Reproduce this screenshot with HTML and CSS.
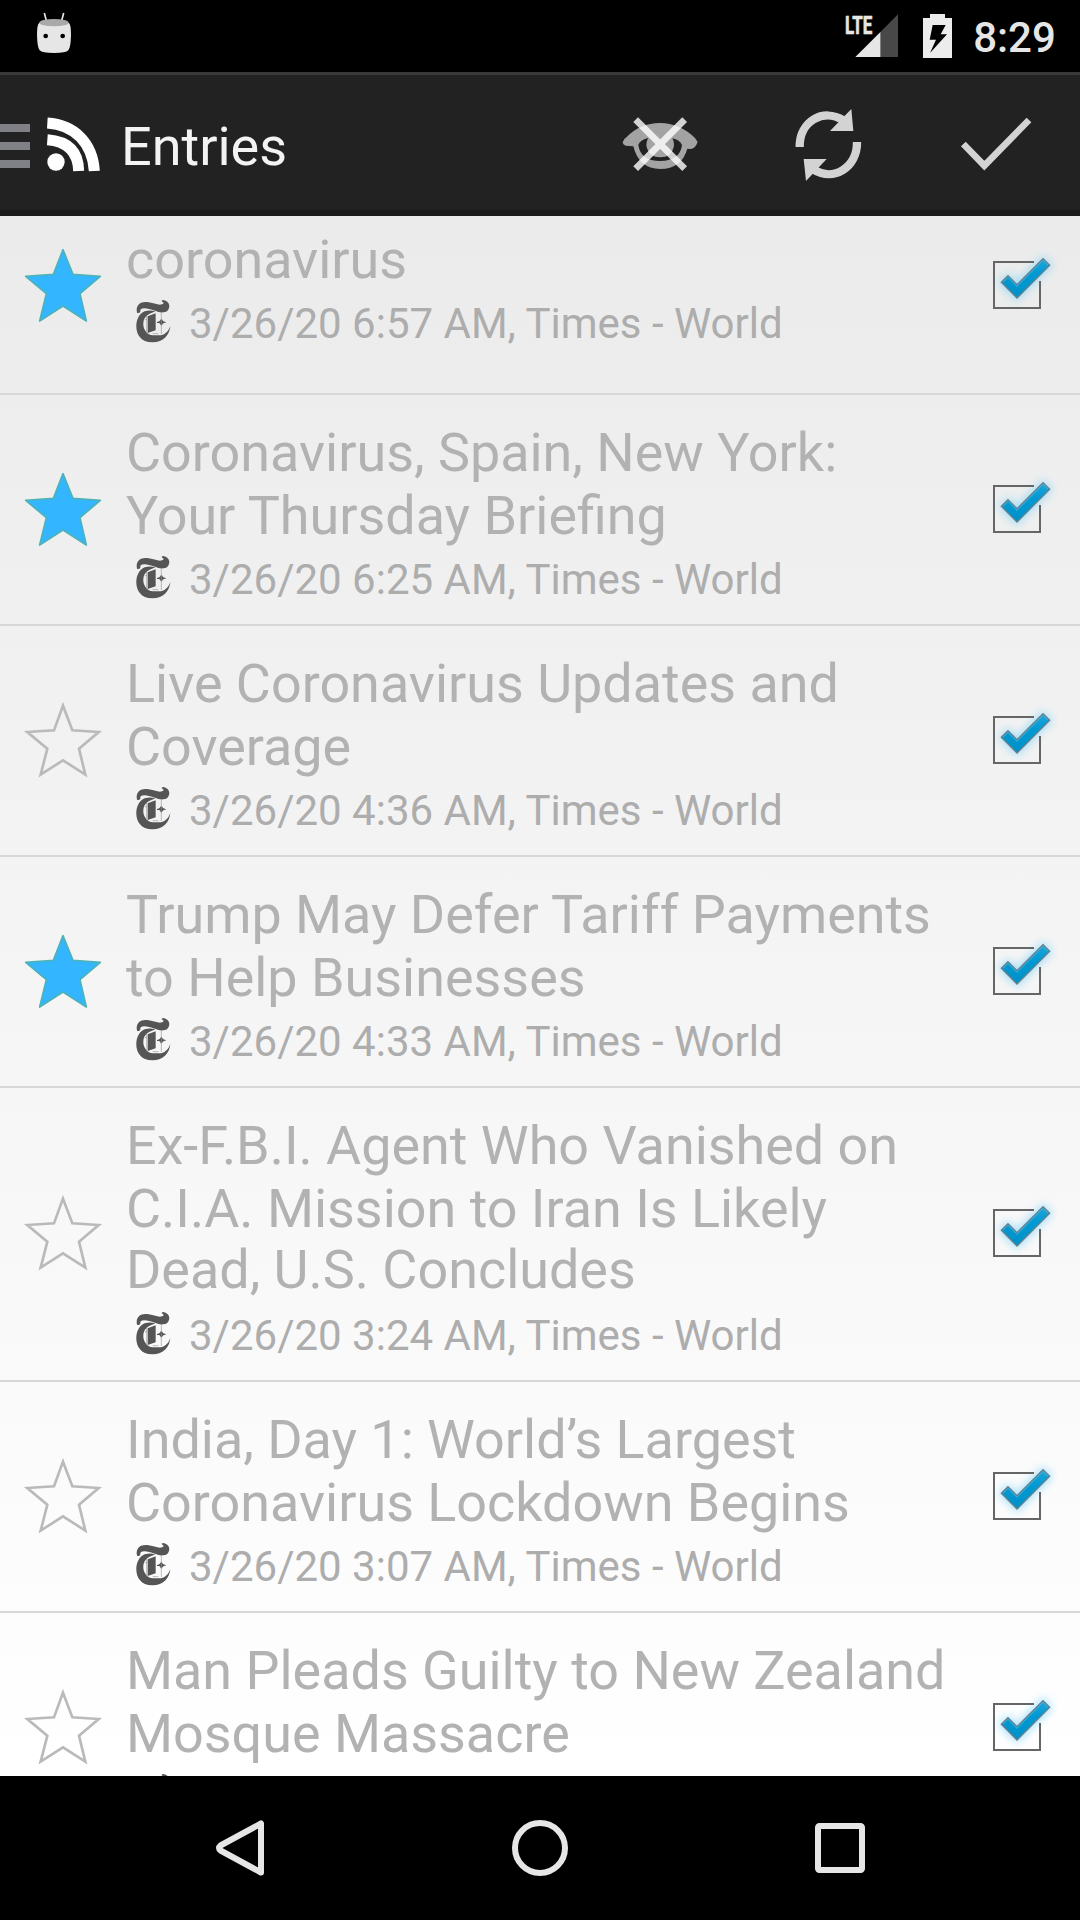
FILE: index.html
```html
<!DOCTYPE html>
<html lang="en">
<head>
<meta charset="utf-8">
<title>Entries</title>
<link rel="stylesheet" href="styles.css">
</head>
<body>
<svg class="defs" aria-hidden="true">
  <defs>
    <linearGradient id="tick-fill" x1="0" y1="0" x2="0" y2="1">
      <stop offset="0" stop-color="#1fa6dc"/>
      <stop offset="0.4" stop-color="#0099d3"/>
      <stop offset="1" stop-color="#0091c8"/>
    </linearGradient>
    <filter id="glow" x="-50%" y="-50%" width="200%" height="200%">
      <feGaussianBlur stdDeviation="12"/>
    </filter>
  </defs>
  <symbol id="star" viewBox="69 105 240 240">
    <path d="M189 119 L219 193 L301 199 L240 251 L259 333 L189 288 L119 333 L139 251 L77 199 L160 193 Z"/>
  </symbol>
  <symbol id="star-off" viewBox="69 105 240 240">
    <path d="M189 122 L217 196 L296 201 L237 251 L256 329 L189 286 L122 329 L142 251 L82 201 L162 196 Z"/>
  </symbol>
  <symbol id="paper" viewBox="75 27 108 132">
    <path d="M81 68 C76 42 94 34 112 36 C132 38 145 47 156 43 Q165 39 157 35 Q152 30 160 30 Q176 33 178 47 Q178 64 161 67 C143 70 124 55 103 55 Q88 56 91 66 Q86 71 81 68 Z"/>
    <path d="M104 64 C69 76 65 158 128 157 C160 157 179 134 181 107 C175 126 163 135 147 136 L129 136 C105 135 94 107 103 86 Q111 72 126 68 Q140 64 133 63 Q118 60 104 64 Z"/>
    <path d="M113 79 L137 70 V121 L113 129 Z M141 96 L148 94 L154 86 L160 94 L169 97 L160 100 L154 107 L148 99 L141 99 Z"/>
    <path class="hair" d="M110 78 V130 M154 66 V132 M104 89 H111 M128 131 H145"/>
  </symbol>
  <symbol id="check" viewBox="144 57 210 210">
    <path class="glow" d="M183 157 L204 137 L231 163 L309 85 L330 106 L231 205 Z"/>
    <path class="box" d="M282 96 H162 V234 H300 V153"/>
    <path class="tick" d="M184 157 L204 137 L231 164 L309 86 L329 106 L231 204 Z"/>
    <path class="shine" d="M189 157 L204 142 L231 169 L309 91 L323 105"/>
  </symbol>
</svg>

<div class="screen">
  <header class="status">
    <svg class="debug" viewBox="108 33 108 129">
      <path d="M133 39 L140 66 M191 39 L184 66" stroke="#e6e6e6" stroke-width="5"/>
      <path d="M118 68 Q162 88 206 68 Q213 72 213 105 Q212 144 205 151 Q198 159 162 159 Q126 159 119 151 Q112 144 111 105 Q111 72 118 68 Z" fill="#e6e6e6"/>
      <ellipse cx="162" cy="68" rx="44" ry="11" fill="#a9a9a9"/>
      <circle cx="137" cy="108" r="7"/><circle cx="188" cy="108" r="7"/>
    </svg>
    <svg class="signal" viewBox="72 36 165 141">
      <text class="lte" x="75" y="101" textLength="82" lengthAdjust="spacingAndGlyphs">LTE</text>
      <path d="M106 171 L182 95 V171 Z" fill="#e6e6e6"/>
      <path d="M182 95 L234 43 V171 H182 Z" fill="#484848"/>
    </svg>
    <svg class="battery" viewBox="306 36 93 141">
      <path d="M309 54 H330 V42 H375 V54 H396 V174 H309 Z" fill="#ececec"/>
      <path d="M338 75 H377 L362 103 H381 L330 159 L348 119 H329 Z" fill="#000"/>
    </svg>
    <span class="clock">8:29</span>
  </header>

  <nav class="bar">
    <span class="drawer"><i></i><i></i><i></i></span>
    <svg class="rss" viewBox="138 348 165 168">
      <circle cx="168" cy="486" r="26" fill="#fff"/>
      <path d="M142 419 Q234 426 236 513 M142 369 C224 374 278 430 283 513" fill="none" stroke="#fff" stroke-width="33"/>
    </svg>
    <h1>Entries</h1>
    <div class="actions">
      <svg viewBox="36 78 288 288">
        <path fill="#a3a3a3" fill-rule="evenodd" d="M68 217 Q70 207 80 201 Q120 160 180 159 Q240 160 285 204 L293 216 Q285 238 270 237 L262 236 Q245 296 181 297 Q116 296 100 229 L77 227 Q68 224 68 217 Z M115 224 Q121 272 181 273 Q240 272 246 225 Q240 210 217 205 Q224 216 221 232 Q214 262 181 262 Q148 262 140 232 Q137 216 145 204 Q122 209 115 224 Z"/>
        <path d="M107 149 L254 296 M254 149 L107 296" stroke="#fff" stroke-opacity=".8" stroke-width="20"/>
      </svg>
      <svg viewBox="540 78 288 288">
        <path d="M599 231 C598 154 670 113 730 151 M771 216 C772 292 701 336 641 299" fill="none" stroke="#d3d3d3" stroke-width="25"/>
        <path d="M754 117 L760 183 H690 Z M618 333 L611 267 H680 Z" fill="#d3d3d3"/>
      </svg>
      <svg viewBox="1044 78 288 288">
        <path d="M1090 222 L1153 287 L1287 150" fill="none" stroke="#d3d3d3" stroke-width="20"/>
      </svg>
    </div>
  </nav>

  <main class="list">
    <article class="entry cut">
      <svg class="star on"><use href="#star"/></svg>
      <div class="body"><h2>coronavirus</h2>
        <p><svg class="paper"><use href="#paper"/></svg>3/26/20 6:57 AM, Times - World</p></div>
      <svg class="check"><use href="#check"/></svg>
    </article>
    <article class="entry">
      <svg class="star on"><use href="#star"/></svg>
      <div class="body"><h2>Coronavirus, Spain, New York:<br>Your Thursday Briefing</h2>
        <p><svg class="paper"><use href="#paper"/></svg>3/26/20 6:25 AM, Times - World</p></div>
      <svg class="check"><use href="#check"/></svg>
    </article>
    <article class="entry">
      <svg class="star"><use href="#star-off"/></svg>
      <div class="body"><h2>Live Coronavirus Updates and<br>Coverage</h2>
        <p><svg class="paper"><use href="#paper"/></svg>3/26/20 4:36 AM, Times - World</p></div>
      <svg class="check"><use href="#check"/></svg>
    </article>
    <article class="entry">
      <svg class="star on"><use href="#star"/></svg>
      <div class="body"><h2>Trump May Defer Tariff Payments<br>to Help Businesses</h2>
        <p><svg class="paper"><use href="#paper"/></svg>3/26/20 4:33 AM, Times - World</p></div>
      <svg class="check"><use href="#check"/></svg>
    </article>
    <article class="entry">
      <svg class="star"><use href="#star-off"/></svg>
      <div class="body"><h2>Ex-F.B.I. Agent Who Vanished on<br>C.I.A. Mission to Iran Is Likely<span class="third">Dead, U.S. Concludes</span></h2>
        <p><svg class="paper"><use href="#paper"/></svg>3/26/20 3:24 AM, Times - World</p></div>
      <svg class="check"><use href="#check"/></svg>
    </article>
    <article class="entry">
      <svg class="star"><use href="#star-off"/></svg>
      <div class="body"><h2>India, Day 1: World’s Largest<br>Coronavirus Lockdown Begins</h2>
        <p><svg class="paper"><use href="#paper"/></svg>3/26/20 3:07 AM, Times - World</p></div>
      <svg class="check"><use href="#check"/></svg>
    </article>
    <article class="entry">
      <svg class="star"><use href="#star-off"/></svg>
      <div class="body"><h2>Man Pleads Guilty to New Zealand<br>Mosque Massacre</h2>
        <p><svg class="paper"><use href="#paper"/></svg></p></div>
      <svg class="check"><use href="#check"/></svg>
    </article>
  </main>

  <footer class="keys">
    <svg viewBox="0 0 72 72"><path d="M57 11.5 V60.5 L16.500 38.500 Q13.500 36 16.500 33.500 Z"/></svg>
    <svg viewBox="0 0 72 72"><circle cx="36" cy="36" r="25"/></svg>
    <svg viewBox="0 0 72 72"><rect x="14" y="14" width="44" height="44" rx="1.500"/></svg>
  </footer>
</div>
</body>
</html>
```

FILE: styles.css
```css
* { box-sizing: border-box; }
body {
  margin: 0;
  background: #000;
  font-family: Roboto, "Noto Sans", sans-serif;
}
h1, h2, p { margin: 0; font-weight: 400; }
svg { display: block; flex: none; }
.defs { position: absolute; width: 0; height: 0; }

.screen {
  width: 1080px;
  height: 1920px;
  display: flex;
  flex-direction: column;
  overflow: hidden;
}

/* Status bar */
.status {
  height: 72px;
  flex: none;
  display: flex;
  align-items: flex-start;
  padding: 11px 24px 0 36px;
  color: #e6e6e6;
}
.debug { width: 36px; height: 43px; }
.signal { width: 55px; height: 47px; margin: 1px 0 0 auto; overflow: visible; }
.lte { font: 700 79px Roboto, sans-serif; fill: #e6e6e6; stroke: #e6e6e6; stroke-width: 2; }
.battery { width: 31px; height: 47px; margin: 1px 0 0 23px; }
.clock {
  width: 83px;
  margin-left: 20px;
  font-size: 42px;
  font-weight: 500;
  line-height: 49px;
  margin-top: 2px;
  text-align: center;
}

/* Action bar */
.bar {
  height: 144px;
  flex: none;
  display: flex;
  align-items: center;
  background: #222;
  border-top: 3px solid #393939;
  border-bottom: 6px solid #1a1a1a;
}
.drawer {
  width: 30px;
  display: flex;
  flex-direction: column;
  gap: 10px;
  margin-top: 7px;
}
.drawer i { height: 8px; background: #808186; }
.rss { width: 55px; height: 56px; margin: 3px 0 0 16px; }
.bar h1 {
  margin-left: 20px;
  margin-top: 8px;
  color: #f3f3f3;
  font-size: 54px;
  line-height: 63px;
}
.actions { display: flex; margin-left: auto; padding-top: 3px; }
.actions svg { width: 96px; height: 96px; margin: 0 36px; }

/* Entry list */
.list {
  height: 1560px;
  flex: none;
  overflow: hidden;
  background: linear-gradient(#ebebeb, #fff);
}
.entry {
  display: flex;
  align-items: center;
  border-bottom: 2px solid #d7d7d7;
  padding-right: 22px;
}
.star {
  width: 80px;
  height: 80px;
  margin: -2px 23px 0;
  fill: none;
  stroke: #bababa;
  stroke-width: 8;
}
.star.on { fill: #33b5ff; stroke: #4db3b8; stroke-width: 5; stroke-linejoin: round; }
.body { flex: 1; padding: 26px 0 20px; white-space: nowrap; }
.body h2 {
  color: #b2b2b2;
  font-size: 53.9px;
  line-height: 63px;
}
/* the last line of a three-line title sits slightly tighter */
.third { display: block; margin-top: -2px; padding-bottom: 2px; }
.body p {
  display: flex;
  align-items: center;
  height: 49px;
  margin-top: 8px;
  color: #adadad;
  font-size: 42px;
  line-height: 49px;
}
.paper {
  width: 36px;
  height: 44px;
  margin: -6px 18px 0 9px;
  fill: #555;
}
.hair { fill: none; stroke: #999; stroke-width: 2; }
.check { width: 70px; height: 70px; margin-top: -4px; }
.box { fill: none; stroke: #666; stroke-width: 6; }
.glow { fill: #5cc8f5; stroke: #8ad8fa; stroke-width: 14; opacity: .65; filter: url(#glow); }
.tick { fill: url(#tick-fill); stroke: #64808c; stroke-width: 4; }
.shine { fill: none; stroke: #4fb2d8; stroke-width: 3; }

/* First entry, scrolled partly under the action bar */
.cut { margin-top: -39px; height: 218px; }
.cut .body { padding: 6px 0 0; }
.cut .star { margin-top: 0; }
.cut .check { margin-top: -2px; }

/* Navigation keys */
.keys {
  height: 144px;
  flex: none;
  display: flex;
  justify-content: center;
  align-items: center;
  gap: 228px;
}
.keys svg {
  width: 72px;
  height: 72px;
  fill: none;
  stroke: #e6e6e6;
  stroke-width: 6;
  stroke-linejoin: round;
}
```
